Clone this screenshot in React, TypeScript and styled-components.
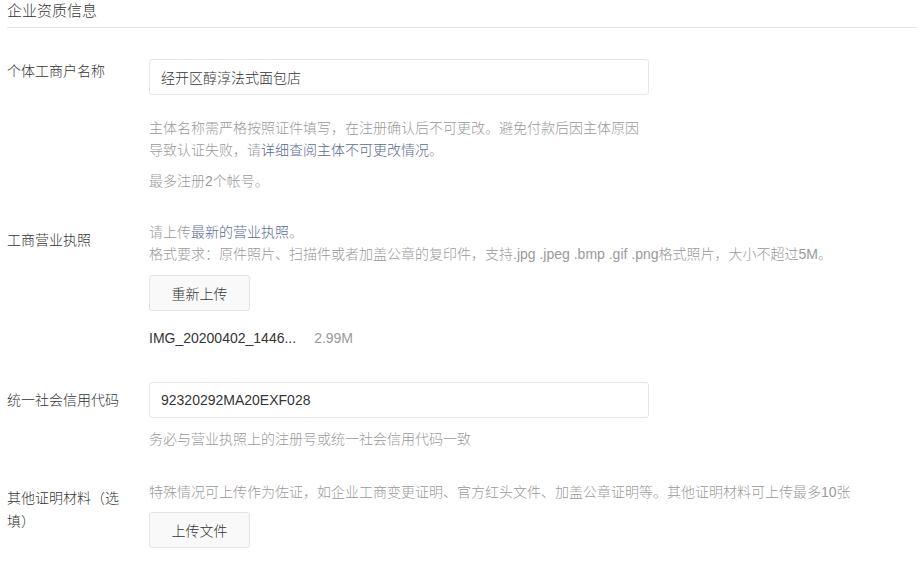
import styled, { createGlobalStyle } from "styled-components";

const GlobalStyle = createGlobalStyle`
  html, body {
    margin: 0;
    padding: 0;
    background: #fff;
  }
  body {
    font-family: "Liberation Sans", "Noto Sans CJK SC", sans-serif;
    font-size: 14px;
    font-weight: 300;
    color: #353535;
  }
`;

const Page = styled.div`
  width: 918px;
  padding: 0 1px 0 7px;
  box-sizing: border-box;
`;

const Title = styled.h3`
  margin: 0;
  font-size: 15px;
  font-weight: 300;
  line-height: 22px;
  height: 27px;
  color: #353535;
  border-bottom: 1px solid #e7e7e7;
`;

const Row = styled.div<{ $top: number }>`
  display: grid;
  grid-template-columns: 142px 1fr;
  margin-top: ${(p) => p.$top}px;
`;

const Label = styled.div<{ $offset: number }>`
  width: 120px;
  padding-top: ${(p) => p.$offset}px;
  line-height: 23px;
  color: #353535;
`;

const Content = styled.div`
  display: flex;
  flex-direction: column;
  align-items: flex-start;
`;

const Input = styled.input`
  width: 500px;
  height: 36px;
  box-sizing: border-box;
  padding: 0 11px;
  border: 1px solid #e6e6e6;
  border-radius: 3px;
  font: inherit;
  font-size: 14px;
  color: #353535;
  outline: none;
`;

const Hint = styled.p<{ $top?: number }>`
  margin: ${(p) => p.$top ?? 0}px 0 0;
  width: 500px;
  line-height: 22px;
  color: #9a9a9a;
`;

const WideHint = styled(Hint)`
  width: auto;
  white-space: nowrap;
`;

const Link = styled.a`
  color: #576b95;
  text-decoration: none;
`;

const Button = styled.button<{ $top: number }>`
  margin-top: ${(p) => p.$top}px;
  width: 101px;
  height: 36px;
  box-sizing: border-box;
  background: #f9f9f9;
  border: 1px solid #e4e4e4;
  border-radius: 3px;
  font: inherit;
  font-size: 14px;
  color: #353535;
  cursor: pointer;
`;

const FileLine = styled.div`
  margin-top: 16px;
  display: flex;
  gap: 18px;
  line-height: 22px;
`;

const FileName = styled.span`
  color: #353535;
`;

const FileSize = styled.span`
  color: #9a9a9a;
`;

export default function App() {
  return (
    <>
      <GlobalStyle />
      <Page>
        <Title>企业资质信息</Title>

        <Row $top={31}>
          <Label $offset={1}>个体工商户名称</Label>
          <Content>
            <Input defaultValue="经开区醇淳法式面包店" />
            <Hint $top={22}>
              主体名称需严格按照证件填写，在注册确认后不可更改。避免付款后因主体原因导致认证失败，请
              <Link href="#">详细查阅主体不可更改情况</Link>。
            </Hint>
            <Hint $top={9}>最多注册2个帐号。</Hint>
          </Content>
        </Row>

        <Row $top={29}>
          <Label $offset={8}>工商营业执照</Label>
          <Content>
            <WideHint>
              请上传<Link href="#">最新的营业执照</Link>。
            </WideHint>
            <WideHint>
              格式要求：原件照片、扫描件或者加盖公章的复印件，支持.jpg .jpeg .bmp .gif .png格式照片，大小不超过5M。
            </WideHint>
            <Button $top={10}>重新上传</Button>
            <FileLine>
              <FileName>IMG_20200402_1446...</FileName>
              <FileSize>2.99M</FileSize>
            </FileLine>
          </Content>
        </Row>

        <Row $top={33}>
          <Label $offset={7}>统一社会信用代码</Label>
          <Content>
            <Input defaultValue="92320292MA20EXF028" />
            <Hint $top={10}>务必与营业执照上的注册号或统一社会信用代码一致</Hint>
          </Content>
        </Row>

        <Row $top={31}>
          <Label $offset={6}>其他证明材料（选填）</Label>
          <Content>
            <WideHint>
              特殊情况可上传作为佐证，如企业工商变更证明、官方红头文件、加盖公章证明等。其他证明材料可上传最多10张
            </WideHint>
            <Button $top={9}>上传文件</Button>
          </Content>
        </Row>
      </Page>
    </>
  );
}
